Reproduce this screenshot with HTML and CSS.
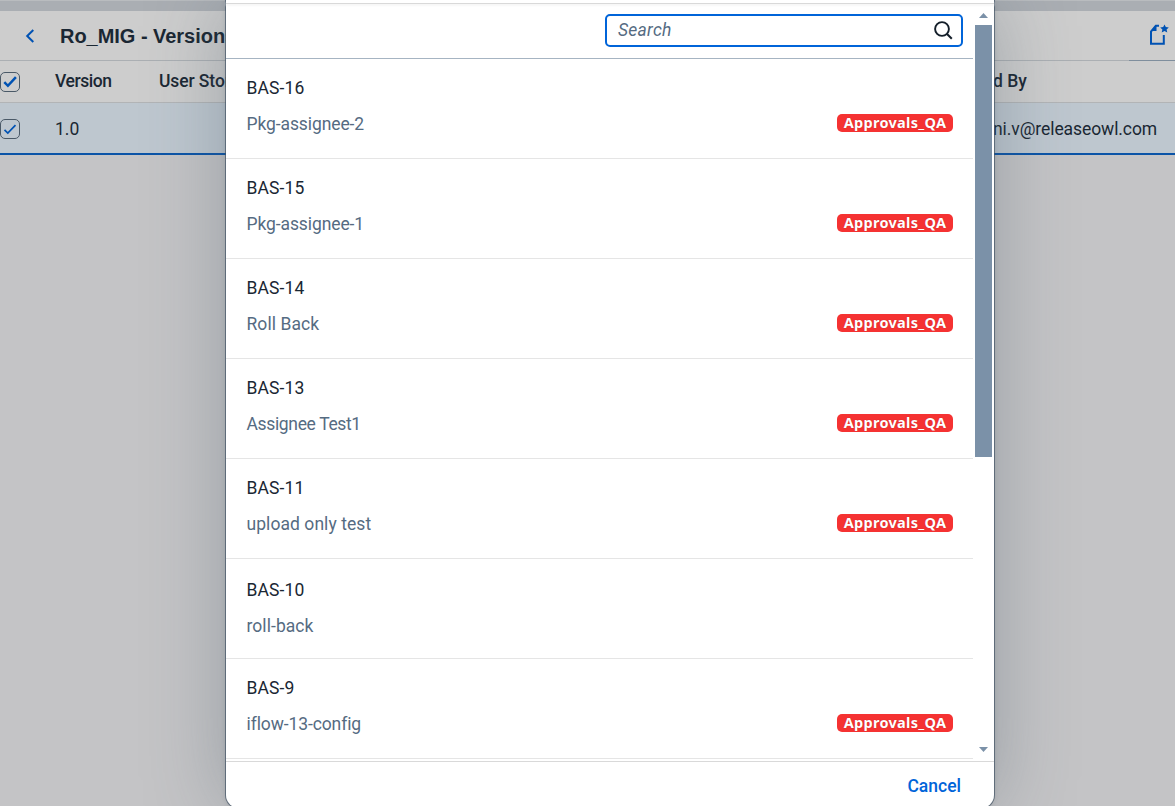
FILE: index.html
```html
<!DOCTYPE html>
<html lang="en">
<head>
<meta charset="utf-8">
<title>Versions</title>
<link rel="stylesheet" href="styles.css">
</head>
<body>
<div class="page">
  <div class="topstrip"></div>
  <header class="pagehead">
    <svg class="back" width="10" height="14" viewBox="0 0 10 14"><path d="M8.3 1 2.200 7l6.100 6" fill="none" stroke="#0052b3" stroke-width="2"/></svg>
    <h1 class="title">Ro_MIG - Versions</h1>
    <svg class="create" width="20" height="22" viewBox="0 0 20 22"><path d="M10 1.800H6.800L2 7.500V19.800H14.800V11" fill="none" stroke="#0052b3" stroke-width="2"/><path d="M7.500 1v6H1.500z" fill="#0052b3"/><path d="m15.500.5 1.300 2.600 3 .4-2.200 2 .7 3.100-2.800-1.500-2.800 1.500.7-3.100-2.200-2 3-.4z" fill="#0052b3"/></svg>
  </header>
  <div class="row heading">
    <span class="check"><svg width="18" height="18" viewBox="0 0 18 18"><path d="m3.300 9.200 3.600 3.600 8-8.600" fill="none" stroke="#0052b3" stroke-width="2.500"/></svg></span>
    <span class="version medium">Version</span><span class="story medium">User Stories</span><span class="by medium">d By</span>
  </div>
  <div class="row selected">
    <span class="check"><svg width="18" height="18" viewBox="0 0 18 18"><path d="m3.500 9.800 3.300 3.300 7.700-7.900" fill="none" stroke="#0052b3" stroke-width="1.700"/></svg></span>
    <span class="version">1.0</span><span class="mail">ni.v@releaseowl.com</span>
  </div>
</div>
<section class="dialog">
  <div class="dialogtop"></div>
  <div class="body">
    <div class="content">
      <div class="toolbar"><div class="search"><span class="placeholder">Search</span><svg width="20" height="20" viewBox="0 0 20 20"><circle cx="9" cy="8" r="6.900" fill="none" stroke="#131e29" stroke-width="1.900"/><path d="m13.800 12.800 5 5" stroke="#131e29" stroke-width="2"/></svg></div></div>
      <ul class="list">
        <li class="item"><div><p class="key">BAS-16</p><p class="desc">Pkg-assignee-2</p></div><span class="tag">Approvals_QA</span></li>
        <li class="item"><div><p class="key">BAS-15</p><p class="desc">Pkg-assignee-1</p></div><span class="tag">Approvals_QA</span></li>
        <li class="item"><div><p class="key">BAS-14</p><p class="desc wide">Roll Back</p></div><span class="tag">Approvals_QA</span></li>
        <li class="item"><div><p class="key">BAS-13</p><p class="desc tight">Assignee Test1</p></div><span class="tag">Approvals_QA</span></li>
        <li class="item"><div><p class="key">BAS-11</p><p class="desc wide">upload only test</p></div><span class="tag">Approvals_QA</span></li>
        <li class="item plain"><div><p class="key">BAS-10</p><p class="desc wide">roll-back</p></div></li>
        <li class="item"><div><p class="key">BAS-9</p><p class="desc">iflow-13-config</p></div><span class="tag">Approvals_QA</span></li>
      </ul>
    </div>
    <div class="scroll">
      <svg width="17" height="22" viewBox="0 0 17 22"><path d="M4 14h9l-4.500-5z" fill="#7b91a8"/></svg>
      <div class="thumb"></div>
      <svg class="down" width="17" height="22" viewBox="0 0 17 22"><path d="M4 9h9l-4.500 5z" fill="#7b91a8"/></svg>
    </div>
  </div>
  <footer class="footer"><span class="cancel">Cancel</span></footer>
</section>
</body>
</html>
```
FILE: styles.css
```css
* { box-sizing: border-box; margin: 0; padding: 0; }
body { position: relative; width: 1175px; height: 806px; overflow: hidden; background: #c4c4c6; font: 17.5px/24px Roboto, sans-serif; color: #1a2733; }
svg { display: block; flex: none; }
.topstrip { height: 11px; background: #aaaeb3; border-top: 1px solid #b9bcbf; }
.pagehead { height: 50px; display: flex; align-items: center; padding: 0 6px 0 25px; background: linear-gradient(#7f8e9d, #7f8e9d) right bottom / 46px 1px no-repeat, linear-gradient(#abafb3, #abafb3) bottom / 100% 1px no-repeat #cdcdcd; }
.create { margin-top: -2px; }
.title { flex: 1; margin-left: 25px; font: bold 20px/24px "Liberation Sans", sans-serif; letter-spacing: -0.03px; }
.row { display: flex; align-items: center; white-space: nowrap; }
.heading { height: 42px; background: #cdcdcd; border-bottom: 1px solid #b2b4b6; }
.heading span:not(.check) { padding-bottom: 2px; }
.selected { height: 52px; background: #bec7cf; border-bottom: 2px solid #0b54a7; padding-top: 2px; }
.medium { font-weight: 500; }
.check { flex: none; width: 20px; height: 20px; border: 1px solid #4a5967; border-radius: 5px; }
.version { width: 103px; margin-left: 35px; }
.heading .version { letter-spacing: -0.45px; }
.story { width: 835px; padding-left: 1px; letter-spacing: -0.1px; }
.mail { margin-left: 835px; letter-spacing: -0.08px; }
.dialog { position: absolute; left: 226px; top: 0; width: 768px; height: 808px; display: flex; flex-direction: column; background: #fff; border-radius: 0 0 13px 13px; box-shadow: 0 0 0 1px rgba(65,82,100,.7), 0 0 5px rgba(50,65,80,.2), 0 0 80px rgba(70,85,100,.36); }
.dialogtop { height: 4px; border-bottom: 1px solid #d9d9d9; flex: none; box-shadow: 0 2px 2px #f7f7f7; }
.body { height: 757px; display: flex; overflow: hidden; }
.content { width: 747px; }
.toolbar { height: 55px; padding: 10px 10px 0 0; display: flex; justify-content: flex-end; border-bottom: 1px solid #a6b4c2; }
.search { width: 358px; height: 33px; border: 2px solid #0064d9; border-radius: 5px; display: flex; align-items: center; justify-content: space-between; padding: 0 8px 0 11px; }
.placeholder { font-style: italic; color: #556b82; padding-bottom: 2px; letter-spacing: 0.25px; }
.list { list-style: none; }
.item { height: 100px; display: flex; justify-content: space-between; padding: 17px 20px 0 20.5px; border-bottom: 1px solid #e5e5e5; }
.plain { padding-top: 19px; }
.key { margin-bottom: 12px; letter-spacing: 0.12px; }
.desc { color: #556b82; letter-spacing: -0.1px; }
.wide { letter-spacing: 0.06px; }
.tight { letter-spacing: -0.35px; }
.tag { height: 18px; width: 116px; margin-top: 38px; background: #f53232; border-radius: 5px; color: #fff; font: bold 14.5px/16px "Noto Sans", sans-serif; letter-spacing: 0.3px; text-align: center; text-shadow: 0 0 1px #80000080; }
.scroll { width: 17px; margin-left: 2px; display: flex; flex-direction: column; }
.thumb { height: 432px; background: #7b91a8; margin-top: -1px; }
.down { margin-top: auto; margin-bottom: 1px; }
.footer { height: 47px; border-top: 1px solid #d9d9d9; display: flex; justify-content: flex-end; padding: 12px 33px 0 0; }
.cancel { color: #0064d9; font-weight: 500; }
```
